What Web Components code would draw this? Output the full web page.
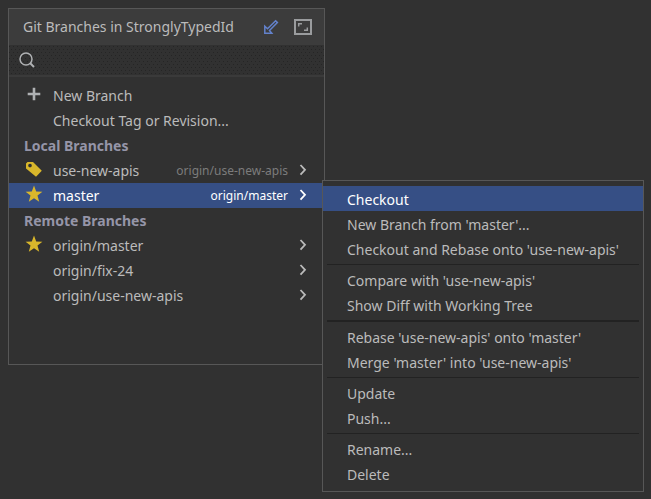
<!DOCTYPE html>
<html lang="en">
<head>
<meta charset="utf-8">
<title>Git Branches</title>
<style>
  body {
    margin: 0;
    padding: 8px 9px 8px 8px;
    min-height: 100vh;
    box-sizing: border-box;
    background: #313131;
    color: #bbbbbb;
    font: 14px/25px "Noto Sans", "Open Sans", sans-serif;
  }
</style>
</head>
<body>
<branch-popup heading="Git Branches in StronglyTypedId">
  <branch-row icon="plus">New Branch</branch-row>
  <branch-row>Checkout Tag or Revision...</branch-row>
  <branch-group label="Local Branches">
    <branch-row icon="tag" tracking="origin/use-new-apis" submenu>use-new-apis</branch-row>
    <branch-row icon="star" tracking="origin/master" submenu selected>master</branch-row>
  </branch-group>
  <branch-group label="Remote Branches">
    <branch-row icon="star" submenu>origin/master</branch-row>
    <branch-row submenu>origin/fix-24</branch-row>
    <branch-row submenu>origin/use-new-apis</branch-row>
  </branch-group>
</branch-popup>

<action-menu>
  <menu-item selected>Checkout</menu-item>
  <menu-item>New Branch from 'master'...</menu-item>
  <menu-item>Checkout and Rebase onto 'use-new-apis'</menu-item>
  <menu-divider></menu-divider>
  <menu-item>Compare with 'use-new-apis'</menu-item>
  <menu-item>Show Diff with Working Tree</menu-item>
  <menu-divider thick></menu-divider>
  <menu-item>Rebase 'use-new-apis' onto 'master'</menu-item>
  <menu-item>Merge 'master' into 'use-new-apis'</menu-item>
  <menu-divider></menu-divider>
  <menu-item>Update</menu-item>
  <menu-item>Push...</menu-item>
  <menu-divider></menu-divider>
  <menu-item>Rename...</menu-item>
  <menu-item>Delete</menu-item>
</action-menu>

<script>
const ICONS = {
  plus: `<svg width="16" height="16" viewBox="0 0 16 16"><path d="M8 1.700v12.600M1.700 8h12.600" stroke="#afb1b3" stroke-width="2.600"/></svg>`,
  tag: `<svg width="18" height="18" viewBox="0 0 18 18"><path fill="#d9b72b" fill-rule="evenodd" d="M1 3.500L2.500 2H8L16.800 10.800L11 16.700L1 8.500ZM5 3.700a1.800 1.800 0 1 0 .01 0Z"/></svg>`,
  star: `<svg width="18" height="18" viewBox="0 0 18 18"><path fill="#d9b72b" d="M9 0.500L11.200 6.500L17.400 6.700L12.500 10.600L14.200 16.700L9 13.300L3.800 16.700L5.500 10.600L.6 6.700L6.800 6.500Z"/></svg>`,
  search: `<svg width="18" height="18" viewBox="0 0 18 18"><circle cx="8" cy="8" r="6" fill="none" stroke="#afb1b3" stroke-width="1.500"/><path d="M12 12l4 4" stroke="#afb1b3" stroke-width="2"/></svg>`,
  chevron: `<svg width="8" height="12" viewBox="0 0 8 12"><path d="M1.500 1L6 5.800L1.500 10.600" fill="none" stroke="currentColor" stroke-width="1.800"/></svg>`,
  fetch: `<svg width="16" height="16" viewBox="0 0 16 16"><path d="M12.600 1.800L14.400 3.600L6.500 11.500L8.800 14.200H1.800V7.200L4.500 9.700Z" fill="none" stroke="#6382cc" stroke-width="1.500"/></svg>`,
  restore: `<svg width="18" height="16" viewBox="0 0 18 16"><path d="M1 1h16v14H1Z" fill="none" stroke="#9a9c9e" stroke-width="2"/><path d="M4.700 7.500V4.700H8M13.300 8.500v2.800H10" fill="none" stroke="#9a9c9e" stroke-width="1.500"/></svg>`
};

// staggered dots behind the search field
const DOTS = encodeURIComponent(
  `<svg xmlns="http://www.w3.org/2000/svg" width="4" height="6"><path fill="#252525" d="M0 1h1v1H0ZM2 4h1v1H2Z"/></svg>`
);

class BranchPopup extends HTMLElement {
  constructor() {
    super();
    this.attachShadow({ mode: "open" });
  }

  connectedCallback() {
    this.shadowRoot.innerHTML = `
      <style>
        :host {
          display: flex;
          flex-direction: column;
          box-sizing: border-box;
          width: 50%;
          min-height: 357px;
          border: 1px solid #575757;
        }

        header {
          display: flex;
          align-items: center;
          box-sizing: border-box;
          height: 36px;
          padding: 0 12px 1px 14px;
          background: #3c3c3c;
        }

        h1 {
          flex: 1;
          margin: 0;
          font: inherit;
          white-space: nowrap;
        }

        button {
          display: flex;
          margin: 0 0 0 15px;
          padding: 0;
          border: 0;
          background: none;
        }

        .search {
          display: flex;
          align-items: center;
          gap: 8px;
          height: 30px;
          padding: 0 9px;
          border-bottom: 2px solid #3a3a3a;
          background: url("data:image/svg+xml,${DOTS}");
        }

        input {
          flex: 1;
          min-width: 0;
          padding: 0;
          border: 0;
          outline: 0;
          background: none;
          color: inherit;
          font: inherit;
        }

        .list {
          padding-top: 6px;
        }
      </style>
      <header>
        <h1>${this.getAttribute("heading")}</h1>
        <button type="button" aria-label="Fetch">${ICONS.fetch}</button>
        <button type="button" aria-label="Restore size">${ICONS.restore}</button>
      </header>
      <label class="search">${ICONS.search}<input type="text" aria-label="Search branches"></label>
      <div class="list"><slot></slot></div>
    `;
  }
}

class BranchGroup extends HTMLElement {
  constructor() {
    super();
    this.attachShadow({ mode: "open" });
  }

  connectedCallback() {
    this.shadowRoot.innerHTML = `
      <style>
        :host {
          display: block;
        }

        h2 {
          margin: 0;
          padding-left: 15px;
          color: #9595a8;
          font: inherit;
          font-weight: bold;
        }
      </style>
      <h2>${this.getAttribute("label")}</h2>
      <slot></slot>
    `;
  }
}

class BranchRow extends HTMLElement {
  constructor() {
    super();
    this.attachShadow({ mode: "open" });
  }

  connectedCallback() {
    const icon = ICONS[this.getAttribute("icon")] || "";
    const tracking = this.getAttribute("tracking") || "";
    this.shadowRoot.innerHTML = `
      <style>
        :host {
          display: block;
        }

        button {
          display: flex;
          align-items: center;
          width: 100%;
          height: 25px;
          padding: 0 17px 0 16px;
          border: 0;
          background: none;
          color: inherit;
          font: inherit;
          text-align: left;
          white-space: nowrap;
        }

        .icon {
          display: flex;
          justify-content: center;
          width: 18px;
          margin-right: 10px;
          padding-bottom: 3px;
        }

        .name {
          flex: 1;
        }

        .tracking {
          color: #7c7c7c;
          font-size: 12px;
        }

        .arrow {
          display: flex;
          margin-left: 11px;
          padding-bottom: 2px;
        }

        :host([selected]) button {
          background: #364f85;
          color: #ffffff;
        }

        :host([selected]) .tracking {
          color: inherit;
        }
      </style>
      <button type="button">
        <span class="icon">${icon}</span>
        <span class="name"><slot></slot></span>
        <span class="tracking">${tracking}</span>
        ${this.hasAttribute("submenu") ? `<span class="arrow">${ICONS.chevron}</span>` : ""}
      </button>
    `;
  }
}

class ActionMenu extends HTMLElement {
  constructor() {
    super();
    this.attachShadow({ mode: "open" });
    this.shadowRoot.innerHTML = `
      <style>
        /* opens over the popup, next to the selected branch */
        :host {
          position: absolute;
          top: 180px;
          left: 322px;
          right: 7px;
          padding: 5px 0;
          border: 1px solid #575757;
          background: #313131;
        }
      </style>
      <slot></slot>
    `;
  }
}

class MenuItem extends HTMLElement {
  constructor() {
    super();
    this.attachShadow({ mode: "open" });
    this.shadowRoot.innerHTML = `
      <style>
        :host {
          display: block;
        }

        button {
          display: block;
          width: 100%;
          height: 25px;
          padding: 1px 24px 0;
          border: 0;
          background: none;
          color: inherit;
          font: inherit;
          text-align: left;
          white-space: nowrap;
        }

        :host([selected]) button {
          background: #364f85;
          color: #ffffff;
        }
      </style>
      <button type="button"><slot></slot></button>
    `;
  }
}

class MenuDivider extends HTMLElement {
  constructor() {
    super();
    this.attachShadow({ mode: "open" });
    this.shadowRoot.innerHTML = `
      <style>
        :host {
          display: block;
          padding: 3px 4px 2px;
        }

        hr {
          margin: 0;
          border: 0;
          border-top: 1px solid #222222;
        }

        :host([thick]) hr {
          border-top-width: 2px;
        }
      </style>
      <hr>
    `;
  }
}

customElements.define("branch-popup", BranchPopup);
customElements.define("branch-group", BranchGroup);
customElements.define("branch-row", BranchRow);
customElements.define("action-menu", ActionMenu);
customElements.define("menu-item", MenuItem);
customElements.define("menu-divider", MenuDivider);
</script>
</body>
</html>
